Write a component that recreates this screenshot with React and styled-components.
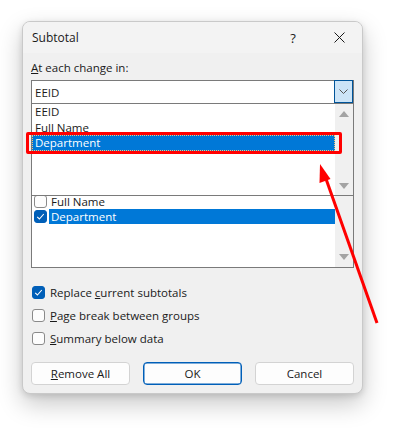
import React from 'react';
import styled, { createGlobalStyle } from 'styled-components';

const GlobalStyle = createGlobalStyle`
  *, *::before, *::after { box-sizing: border-box; }
  body {
    margin: 0;
    background: #ffffff;
    font-family: "Open Sans", "Liberation Sans", sans-serif;
    font-size: 11.5px;
    color: #1a1a1a;
  }
`;

const Page = styled.div`
  position: relative;
  width: 397px;
  height: 431px;
  padding: 21px 0 0 22px;
  overflow: hidden;
`;

const Dialog = styled.div`
  width: 341px;
  height: 373px;
  background: #f0f0f0;
  border: 1px solid #c9c9c9;
  border-radius: 8px;
  box-shadow: 0 10px 24px rgba(0, 0, 0, 0.22), 0 2px 6px rgba(0, 0, 0, 0.12);
  overflow: hidden;
`;

const TitleBar = styled.div`
  height: 31px;
  background: #f3f3f3;
  display: flex;
  align-items: center;
  padding-left: 9px;
`;

const Title = styled.div`
  flex: 1;
  font-size: 12px;
  color: #1a1a1a;
`;

const TitleButton = styled.div`
  width: 46px;
  height: 31px;
  display: flex;
  align-items: center;
  justify-content: center;
  font-size: 13px;
  color: #1a1a1a;
`;

const Body = styled.div`
  padding: 0 8px;
  display: flex;
  flex-direction: column;
`;

const Label = styled.div`
  margin-top: 7px;
  line-height: 16px;
`;

const Combo = styled.div`
  margin-top: 4px;
  height: 24px;
  background: #fff;
  border: 1px solid #7a7a7a;
  display: flex;
  align-items: center;
  padding-left: 3px;
`;

const ComboText = styled.div`
  flex: 1;
`;

const ComboButton = styled.div`
  width: 19px;
  height: 23px;
  margin-top: -1px;
  background: #cce4f7;
  border: 1px solid #005499;
  display: flex;
  align-items: center;
  justify-content: center;
`;

const ListBox = styled.div`
  height: ${p => p.$height}px;
  background: #fff;
  border: 1px solid #7a7a7a;
  border-top: none;
  display: flex;
  overflow: hidden;
`;

const Items = styled.div`
  flex: 1;
  margin-top: ${p => p.$offset || 0}px;
`;

const Item = styled.div`
  height: 15.5px;
  line-height: 15.5px;
  padding-left: 3px;
  background: ${p => (p.$selected ? '#0078d7' : 'transparent')};
  color: ${p => (p.$selected ? '#fff' : '#1a1a1a')};
  outline: ${p => (p.$selected ? '1px dotted #f6c27a' : 'none')};
  outline-offset: -1px;
`;

const FieldRow = styled.div`
  height: 15px;
  display: flex;
  align-items: center;
  padding-left: 2px;
`;

const FieldText = styled.div`
  flex: 1;
  height: 15px;
  line-height: 15px;
  margin-left: 2px;
  padding-left: 2px;
  background: ${p => (p.$selected ? '#0078d7' : 'transparent')};
  color: ${p => (p.$selected ? '#fff' : '#1a1a1a')};
`;

const Scrollbar = styled.div`
  width: 18px;
  background: #f0f0f0;
  display: flex;
  flex-direction: column;
  justify-content: space-between;
  align-items: center;
  padding: ${p => p.$pad || '7px 0 6px'};
`;

const Box = styled.div`
  width: 13px;
  height: 13px;
  flex: none;
  border-radius: 3px;
  border: 1px solid ${p => (p.$checked ? '#005fb8' : '#8a8a8a')};
  background: ${p => (p.$checked ? '#005fb8' : '#fdfdfd')};
  display: flex;
  align-items: center;
  justify-content: center;
`;

const Options = styled.div`
  margin-top: 13px;
  display: flex;
  flex-direction: column;
`;

const Option = styled.div`
  height: 23px;
  display: flex;
  align-items: center;
  gap: 5px;
  padding-left: 1px;
`;

const Buttons = styled.div`
  margin-top: 12px;
  display: grid;
  grid-template-columns: 99px 99px 99px;
  justify-content: space-between;
`;

const Button = styled.div`
  height: 23px;
  border-radius: 4px;
  background: #fdfdfd;
  border: 1px solid ${p => (p.$primary ? '#005fb8' : '#d3d3d3')};
  box-shadow: ${p => (p.$primary ? 'inset 0 0 0 0.5px #005fb8' : 'none')};
  display: flex;
  align-items: center;
  justify-content: center;
`;

const Highlight = styled.div`
  position: absolute;
  left: 26px;
  top: 132px;
  width: 316px;
  height: 22px;
  border: 3px solid #ff0000;
  border-radius: 2px;
`;

const ArrowLayer = styled.svg`
  position: absolute;
  left: 0;
  top: 0;
  pointer-events: none;
`;

const Up = () => (
  <svg width="10" height="6" viewBox="0 0 10 6"><path d="M0 6 L5 0 L10 6 Z" fill="#a3a3a3" /></svg>
);

const Down = () => (
  <svg width="10" height="6" viewBox="0 0 10 6"><path d="M0 0 L5 6 L10 0 Z" fill="#a3a3a3" /></svg>
);

const Check = ({ checked }) => (
  <Box $checked={checked}>
    {checked && (
      <svg width="9" height="9" viewBox="0 0 9 9">
        <path d="M1.2 4.8 L3.4 7 L7.8 2" fill="none" stroke="#fff" strokeWidth="1.1" />
      </svg>
    )}
  </Box>
);

export default function App() {
  return (
    <Page>
      <GlobalStyle />
      <Dialog>
        <TitleBar>
          <Title>Subtotal</Title>
          <TitleButton>?</TitleButton>
          <TitleButton>
            <svg width="11" height="11" viewBox="0 0 11 11">
              <path d="M0.5 0.5 L10.5 10.5 M10.5 0.5 L0.5 10.5" stroke="#1a1a1a" strokeWidth="1" />
            </svg>
          </TitleButton>
        </TitleBar>
        <Body>
          <Label><u>A</u>t each change in:</Label>
          <Combo>
            <ComboText>EEID</ComboText>
            <ComboButton>
              <svg width="9" height="5" viewBox="0 0 9 5">
                <path d="M0.5 0.5 L4.5 4.5 L8.5 0.5" fill="none" stroke="#555" strokeWidth="1" />
              </svg>
            </ComboButton>
          </Combo>
          <ListBox $height={92}>
            <Items>
              <Item>EEID</Item>
              <Item>Full Name</Item>
              <Item $selected>Department</Item>
            </Items>
            <Scrollbar>
              <Up />
              <Down />
            </Scrollbar>
          </ListBox>
          <ListBox $height={72}>
            <Items $offset={-2}>
              <FieldRow>
                <Check />
                <FieldText>Full Name</FieldText>
              </FieldRow>
              <FieldRow>
                <Check checked />
                <FieldText $selected>Department</FieldText>
              </FieldRow>
            </Items>
            <Scrollbar $pad="0 0 7px">
              <span />
              <Down />
            </Scrollbar>
          </ListBox>
          <Options>
            <Option><Check checked /><span>Replace <u>c</u>urrent subtotals</span></Option>
            <Option><Check /><span><u>P</u>age break between groups</span></Option>
            <Option><Check /><span><u>S</u>ummary below data</span></Option>
          </Options>
          <Buttons>
            <Button><span><u>R</u>emove All</span></Button>
            <Button $primary>OK</Button>
            <Button>Cancel</Button>
          </Buttons>
        </Body>
      </Dialog>
      <Highlight />
      <ArrowLayer width="397" height="431" viewBox="0 0 397 431">
        <line x1="377" y1="323" x2="325" y2="176" stroke="#ff0000" strokeWidth="3" />
        <path d="M320 164 L330.5 179 L319.5 183 Z" fill="#ff0000" />
      </ArrowLayer>
    </Page>
  );
}
